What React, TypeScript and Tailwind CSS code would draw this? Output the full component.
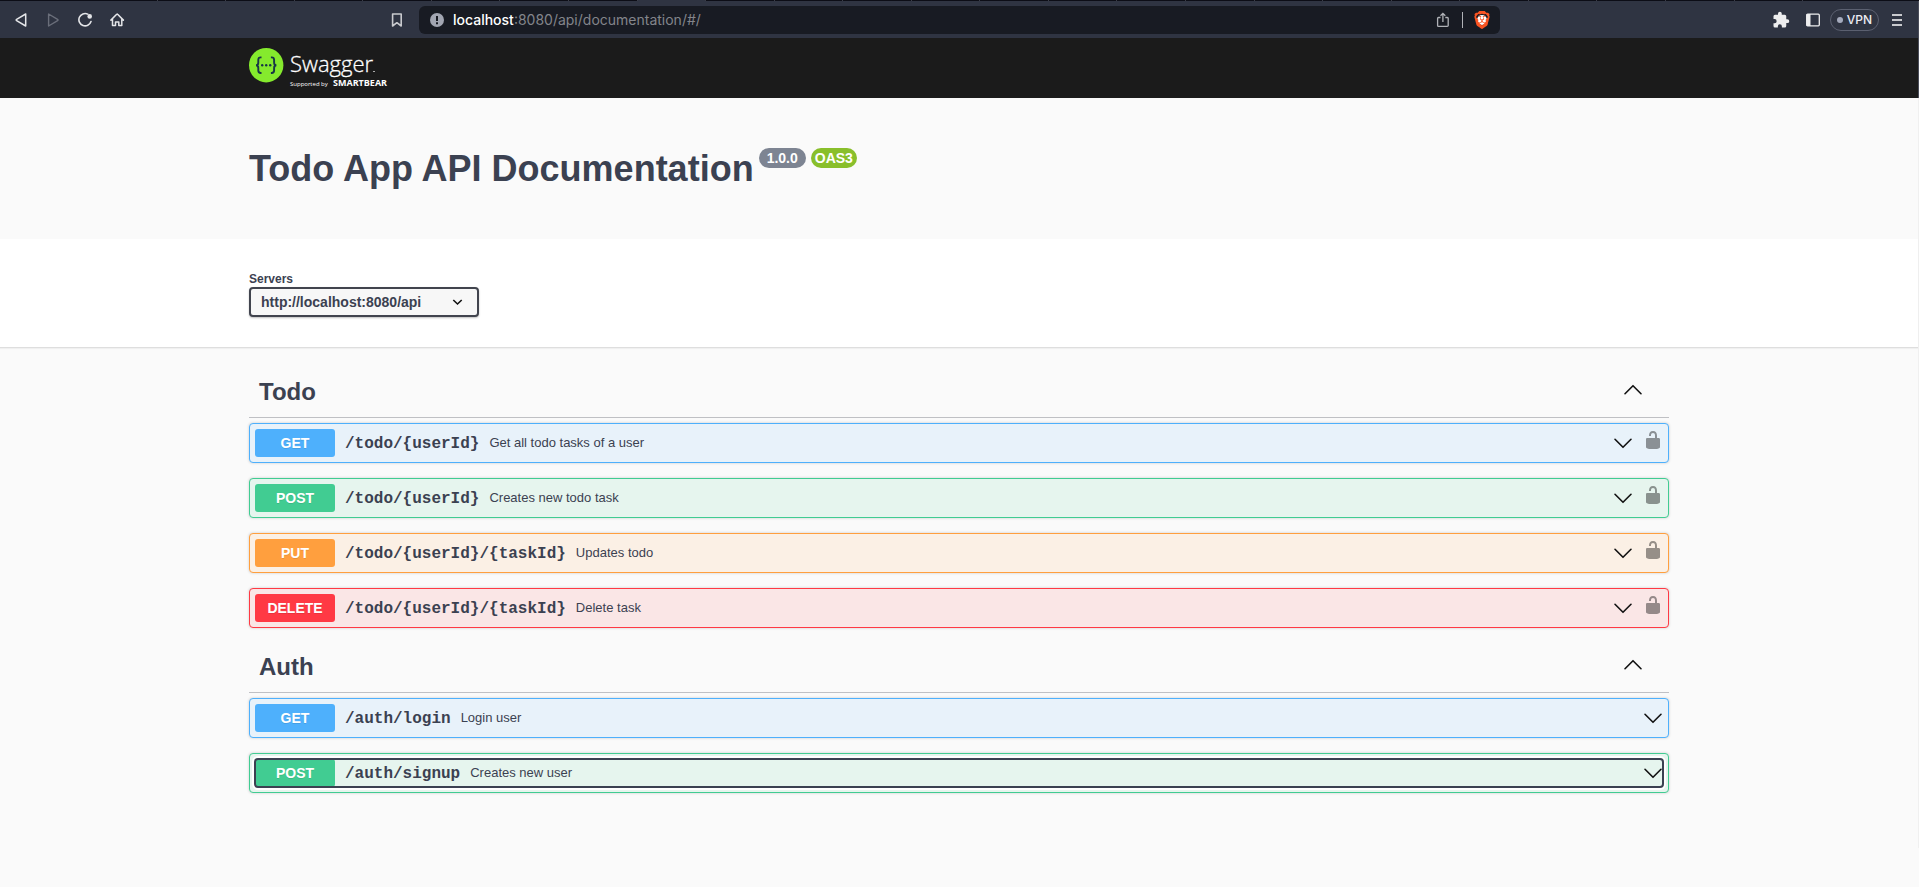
import React, { useState } from "react";
import { SiBrave } from "react-icons/si";

type Method = "GET" | "POST" | "PUT" | "DELETE";

interface Operation {
  method: Method;
  path: string;
  summary: string;
  locked?: boolean;
  focused?: boolean;
}

interface Tag {
  name: string;
  operations: Operation[];
}

const TAGS: Tag[] = [
  {
    name: "Todo",
    operations: [
      { method: "GET", path: "/todo/{userId}", summary: "Get all todo tasks of a user", locked: true },
      { method: "POST", path: "/todo/{userId}", summary: "Creates new todo task", locked: true },
      { method: "PUT", path: "/todo/{userId}/{taskId}", summary: "Updates todo", locked: true },
      { method: "DELETE", path: "/todo/{userId}/{taskId}", summary: "Delete task", locked: true },
    ],
  },
  {
    name: "Auth",
    operations: [
      { method: "GET", path: "/auth/login", summary: "Login user" },
      { method: "POST", path: "/auth/signup", summary: "Creates new user", focused: true },
    ],
  },
];

const BLOCK_STYLES: Record<Method, string> = {
  GET: "border-[#4eb0fc] bg-[#e8f2fa]",
  POST: "border-[#41cc92] bg-[#e6f5ee]",
  PUT: "border-[#ff9f3e] bg-[#fbf0e5]",
  DELETE: "border-[#ff3944] bg-[#fae6e6]",
};

const BADGE_STYLES: Record<Method, string> = {
  GET: "bg-[#4eb0fc]",
  POST: "bg-[#41cc92]",
  PUT: "bg-[#ff9f3e]",
  DELETE: "bg-[#ff3944]",
};

const TAB_COUNT = 25;
const ACTIVE_TAB = 8;

const App: React.FC = () => {
  return (
    <div className="min-h-screen bg-[#fafafa] font-['Liberation_Sans',Arial,sans-serif] text-[#3b4151]">
      <TabStrip />
      <BrowserBar />
      <TopBar />

      <main className="border-r border-[#f0f0f0]">
        {/* Title */}
        <Container>
          <div className="flex items-start gap-[5px] pt-[49px] pb-[48px]">
            <h1 className="text-4xl leading-[44px] font-bold">
              Todo App API Documentation
            </h1>
            <Pill className="bg-[#7d8492] px-2">1.0.0</Pill>
            <Pill className="bg-[#89bf2b] px-1">OAS3</Pill>
          </div>
        </Container>

        {/* Servers */}
        <div className="border-b border-[#dedede] bg-white pt-8 pb-[30px] shadow-[0_1px_1px_rgba(0,0,0,0.04)]">
          <Container>
            <ServerSelect />
          </Container>
        </div>

        {/* Operations */}
        <Container>
          <div className="pt-5 pb-10">
            {TAGS.map((tag) => (
              <TagSection key={tag.name} tag={tag} />
            ))}
          </div>
        </Container>
      </main>
    </div>
  );
};

/* -------- Layout helpers -------- */
const Container = ({ children }: { children: React.ReactNode }) => (
  <div className="mx-auto w-full max-w-[1460px] px-5">{children}</div>
);

const Pill = ({
  className,
  children,
}: {
  className: string;
  children: React.ReactNode;
}) => (
  <span
    className={`mt-[1px] h-5 rounded-full text-sm leading-5 font-bold text-white ${className}`}
  >
    {children}
  </span>
);

/* -------- Browser chrome -------- */
const TabStrip = () => (
  <div className="flex h-px bg-[#0c0d16] pr-[116px] pl-[89px]">
    {Array.from({ length: TAB_COUNT }, (_, i) => (
      <span
        key={i}
        className={`flex-1 border-r border-[#3a3c47] ${i === ACTIVE_TAB ? "bg-[#2f3442]" : ""}`}
      />
    ))}
  </div>
);

const BrowserBar = () => (
  <div className="flex h-[37px] items-center border-r border-[#4a4d5a] bg-[#2f3442] text-[#e4e5e8]">
    <div className="flex flex-1 items-center pl-[14px]">
      <button aria-label="Back">
        <svg width="16" height="16" viewBox="0 0 16 16" fill="none" stroke="currentColor" strokeWidth="1.5" strokeLinejoin="round">
          <path d="M11.7 2v12L2.6 8.7a.8.8 0 0 1 0-1.4Z" />
        </svg>
      </button>
      <button aria-label="Forward" className="ml-4 text-[#6a6e7a]">
        <svg width="16" height="16" viewBox="0 0 16 16" fill="none" stroke="currentColor" strokeWidth="1.4" strokeLinejoin="round">
          <path d="M2.6 2v12l9-5.3a.8.8 0 0 0 0-1.4Z" />
        </svg>
      </button>
      <button aria-label="Reload" className="ml-4">
        <svg width="16" height="16" viewBox="0 0 16 16" fill="none" stroke="currentColor" strokeWidth="1.6">
          <path d="M9.8 2.1A6.2 6.2 0 1 0 13 9.6" strokeLinecap="round" />
          <circle cx="11.7" cy="4.4" r="2.3" fill="currentColor" stroke="none" />
        </svg>
      </button>
      <button aria-label="Home" className="ml-4">
        <svg width="16" height="16" viewBox="0 0 16 16" fill="none" stroke="currentColor" strokeWidth="1.5" strokeLinecap="round" strokeLinejoin="round">
          <path d="M.9 8.100 6.700 2.300a.6.6 0 0 1 .9 0l5.800 5.800M2.500 7.200v6.400h3V9.900h3.300v3.700h3V7.200" />
        </svg>
      </button>
      <button aria-label="Bookmark" className="mr-[14px] ml-auto">
        <svg width="16" height="16" viewBox="0 0 16 16" fill="none" stroke="#c9cace" strokeWidth="1.6" strokeLinejoin="round">
          <path d="M3.6 2h8.6v12L7.9 10.7 3.6 14Z" />
        </svg>
      </button>
    </div>

    <div className="flex h-7 w-[1081px] items-center rounded-md bg-[#181b23] pr-[9px] pl-[11px]">
      <svg width="14" height="14" viewBox="0 0 14 14">
        <circle cx="7" cy="7" r="7" fill="#a2a6b2" />
        <path d="M7 3v5" stroke="#181b23" strokeWidth="2" />
        <path d="M7 9.3v1.9" stroke="#181b23" strokeWidth="2" />
      </svg>
      <p className="ml-[9px] font-[Inter,sans-serif] text-sm text-[#83858b]">
        <span className="font-medium text-white">localhost</span>:8080/api/documentation/#/
      </p>
      <button aria-label="Share" className="ml-auto">
        <svg width="14" height="16" viewBox="0 0 14 16" fill="none" stroke="#b0b2b7" strokeWidth="1.3">
          <path d="M4.5 5.5h-2A.9.9 0 0 0 1.600 6.400v7a.9.9 0 0 0 .9.9h8.800a.9.9 0 0 0 .9-.9v-7a.9.9 0 0 0-.9-.9h-2M6.900 10V1.600M4.500 3.800l2.400-2.400 2.400 2.400" />
        </svg>
      </button>
      <span className="ml-3 h-4 w-px bg-[#b0b2b7]" />
      <button aria-label="Shields" className="relative ml-[10px]">
        <span className="absolute inset-[4px] rounded-md bg-white" />
        <SiBrave size={18} className="relative text-[#fb5422]" />
      </button>
    </div>

    <div className="flex flex-1 items-center justify-end pr-[13px]">
      <button aria-label="Extensions">
        <svg width="18" height="18" viewBox="0 0 24 24" fill="#ededee">
          <path d="M20.500 11H19V7a2 2 0 0 0-2-2h-4V3.500a2.500 2.500 0 0 0-5 0V5H4a2 2 0 0 0-2 2v3.800h1.500a2.700 2.700 0 0 1 0 5.400H2V20a2 2 0 0 0 2 2h3.800v-1.500a2.700 2.700 0 0 1 5.400 0V22H17a2 2 0 0 0 2-2v-4h1.500a2.500 2.500 0 0 0 0-5Z" />
        </svg>
      </button>
      <button aria-label="Sidebar" className="ml-4">
        <svg width="14" height="14" viewBox="0 0 14 14">
          <rect x=".7" y="1.200" width="12.600" height="11.600" rx="1" fill="none" stroke="#ededee" strokeWidth="1.300" />
          <path d="M.5 1h4v12H.5Z" fill="#ededee" />
        </svg>
      </button>
      <button className="ml-[10px] flex h-[22px] items-center gap-1 rounded-full border border-[#5b6070] px-[6px] font-[Inter,sans-serif] text-xs font-medium text-[#ededf2]">
        <span className="size-[6px] rounded-full bg-[#a5abbd]" />
        VPN
      </button>
      <button aria-label="Menu" className="ml-[10px]">
        <svg width="16" height="16" viewBox="0 0 16 16" stroke="#c9cace" strokeWidth="2">
          <path d="M3 3h10M3 8h10M3 13h10" />
        </svg>
      </button>
    </div>
  </div>
);

/* -------- Swagger header -------- */
const TopBar = () => (
  <header className="h-[60px] border-r border-[#4a4d5a] bg-[#1b1b1b]">
    <Container>
      <a href="#/" aria-label="Swagger" className="flex h-[60px] items-start pt-[10px]">
        <svg width="144" height="42" viewBox="0 0 144 42">
          <circle cx="17.200" cy="17.200" r="17.200" fill="#85ea2d" />
          <g fill="none" stroke="#173647" strokeWidth="1.900">
            <path d="M12.500 9.400h-.8c-1.700 0-2.400.8-2.400 2.400v2.600c0 1.800-.7 2.800-2.300 2.800 1.600 0 2.300 1 2.300 2.800v2.600c0 1.600.7 2.400 2.400 2.400h.8" />
            <path d="M21.900 9.400h.8c1.700 0 2.400.8 2.400 2.400v2.600c0 1.800.7 2.800 2.300 2.800-1.600 0-2.300 1-2.300 2.800v2.600c0 1.600-.7 2.400-2.400 2.400h-.8" />
          </g>
          <g fill="#173647">
            <circle cx="13.200" cy="17.200" r="1.200" />
            <circle cx="17.200" cy="17.200" r="1.200" />
            <circle cx="21.200" cy="17.200" r="1.200" />
          </g>
          <text x="41" y="24" fill="#fff" stroke="#fff" strokeWidth=".3" fontFamily="Open Sans" fontSize="22" fontWeight="300">Swagger</text>
          <rect x="124" y="23" width="2" height="1" fill="#aaa" />
          <text x="41" y="38" fill="#fff" fontFamily="Open Sans" fontSize="6">Supported by</text>
          <text x="84" y="38" fill="#fff" fontFamily="Open Sans" fontSize="9" fontWeight="700">SMARTBEAR</text>
        </svg>
      </a>
    </Container>
  </header>
);

/* -------- Servers -------- */
const ServerSelect = () => (
  <div className="flex flex-col items-start">
    <label htmlFor="servers" className="text-xs leading-4 font-bold">
      Servers
    </label>
    <div className="relative">
      <select
        id="servers"
        className="h-[30px] w-[230px] appearance-none rounded border-2 border-[#41444e] bg-[#f7f7f7] pr-10 pl-[10px] text-sm leading-5 font-bold shadow-[0_1px_2px_rgba(0,0,0,0.25)]"
      >
        <option>http://localhost:8080/api</option>
      </select>
      <svg
        className="pointer-events-none absolute top-[10px] right-4"
        width="11"
        height="10"
        viewBox="0 0 11 10"
        fill="none"
        stroke="#111"
        strokeWidth="1.600"
      >
        <path d="m1.300 3 4.200 4 4.200-4" />
      </svg>
    </div>
  </div>
);

/* -------- Tags and operations -------- */
const TagSection = ({ tag }: { tag: Tag }) => {
  const [open, setOpen] = useState(true);

  return (
    <section>
      <h3 className="mb-[5px] border-b border-[#bfc0c4] text-2xl font-bold">
        <button
          onClick={() => setOpen(!open)}
          aria-expanded={open}
          className="flex h-[49px] w-full items-center justify-between pr-[26px] pb-[2px] pl-[10px]"
        >
          {tag.name}
          <span className="pb-1">
            <Chevron up={open} />
          </span>
        </button>
      </h3>
      {open && tag.operations.map((op) => <OperationRow key={op.method + op.path} op={op} />)}
    </section>
  );
};

const OperationRow = ({ op }: { op: Operation }) => (
  <div
    className={`mb-[15px] flex h-10 items-center rounded border p-[5px] shadow-[0_0_3px_rgba(0,0,0,0.19)] ${BLOCK_STYLES[op.method]}`}
  >
    <button
      className={`flex h-7 flex-1 items-center text-left ${op.focused ? "rounded-[3px] shadow-[0_0_0_3px_#fff] outline-2 -outline-offset-1 outline-[#3b4151]" : ""}`}
    >
      <span
        className={`w-20 rounded-[3px] text-center text-sm leading-7 font-bold text-white [text-shadow:0_1px_0_rgba(0,0,0,0.1)] ${BADGE_STYLES[op.method]}`}
      >
        {op.method}
      </span>
      <span className="ml-[10px] pt-[2px] font-['Liberation_Mono',monospace] text-base font-bold">
        {op.path}
      </span>
      <span className="ml-[10px] text-[13px]">{op.summary}</span>
      <span className="ml-auto">
        <Chevron />
      </span>
    </button>
    {op.locked && (
      <button aria-label="Authorize" className="ml-[10px] pb-[6px]">
        <LockIcon />
      </button>
    )}
  </div>
);

/* -------- Icons -------- */
const Chevron = ({ up = false }: { up?: boolean }) => (
  <svg
    width="20"
    height="20"
    viewBox="0 0 20 20"
    fill="none"
    stroke="#111"
    strokeWidth="1.600"
    className={up ? "rotate-180" : ""}
  >
    <path d="m2 6.300 8 8 8-8" strokeLinecap="round" strokeLinejoin="round" />
  </svg>
);

const LockIcon = () => (
  <svg width="20" height="20" viewBox="0 0 20 20" fill="#000" opacity="0.4">
    <path d="M15.800 8H14V5.600C14 2.700 12.665 1 10 1 7.334 1 6 2.700 6 5.600V6h2v-.801C8 3.754 8.797 3 10 3c1.203 0 2 .754 2 2.199V8H4c-.553 0-1 .646-1 1.199V17c0 .549.428 1.139.951 1.307l1.197.387C5.672 18.861 6.550 19 7.100 19h5.800c.549 0 1.428-.139 1.951-.307l1.196-.387c.524-.167.953-.757.953-1.306V9.199C17 8.646 16.352 8 15.800 8z" />
  </svg>
);

export default App;
